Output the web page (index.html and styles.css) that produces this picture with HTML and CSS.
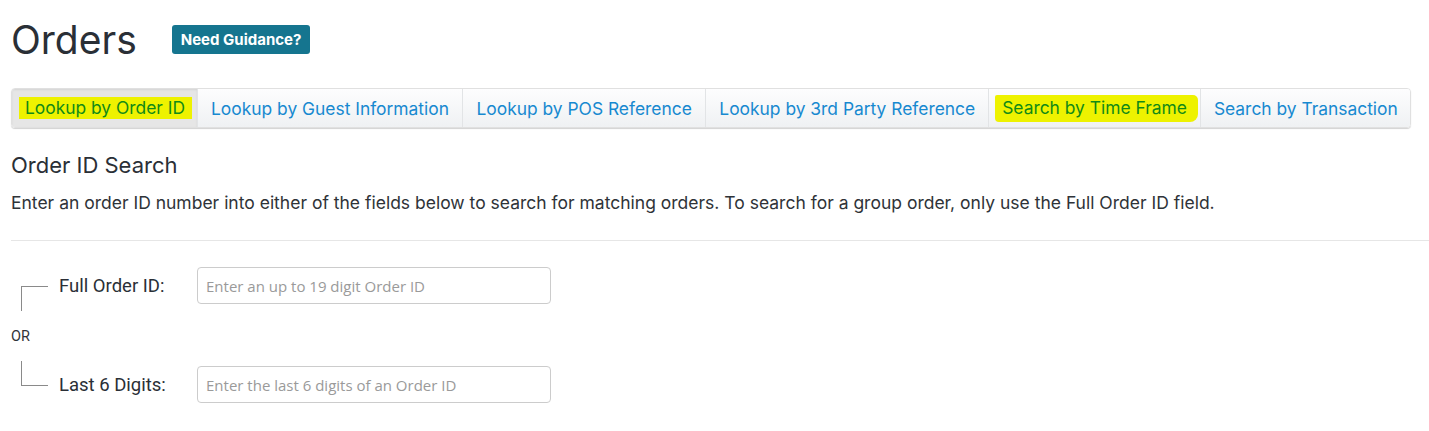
FILE: index.html
```html
<!DOCTYPE html>
<html>
<head>
<meta charset="utf-8">
<link rel="stylesheet" href="styles.css">
</head>
<body>
<div class="page">
  <div class="header">
    <h1 class="title">Orders</h1>
    <button class="guide-btn">Need Guidance?</button>
  </div>
  <div class="tabs">
    <div class="tab active"><span class="hl hl-rect">Lookup by Order ID</span></div>
    <div class="tab">Lookup by Guest Information</div>
    <div class="tab">Lookup by POS Reference</div>
    <div class="tab">Lookup by 3rd Party Reference</div>
    <div class="tab"><span class="hl hl-free">Search by Time Frame</span></div>
    <div class="tab last">Search by Transaction</div>
  </div>
  <h2 class="section-title">Order ID Search</h2>
  <p class="desc">Enter an order ID number into either of the fields below to search for matching orders. To search for a group order, only use the Full Order ID field.</p>
  <hr class="divider">
  <div class="form">
    <div class="connector">
      <div class="bracket top"></div>
      <div class="or">OR</div>
      <div class="bracket bottom"></div>
    </div>
    <div class="fields">
      <div class="row">
        <label class="label">Full Order ID:</label>
        <input class="input" type="text" placeholder="Enter an up to 19 digit Order ID">
      </div>
      <div class="row">
        <label class="label">Last 6 Digits:</label>
        <input class="input" type="text" placeholder="Enter the last 6 digits of an Order ID">
      </div>
    </div>
  </div>
</div>
</body>
</html>
```

FILE: styles.css
```css
* { box-sizing: border-box; }
html, body { margin: 0; padding: 0; background: #fff; }
body { font-family: Inter, "Liberation Sans", sans-serif; color: #2f3338; }
.page { padding: 0 0 0 11px; }

.header { display: flex; align-items: center; height: 78px; }
.title { margin: 0; font-size: 39px; font-weight: 400; color: #2a2f36; line-height: 1; }
.guide-btn {
  margin-left: 35px;
  background: #15758f; color: #fff; border: none; border-radius: 3px;
  font-family: Inter, "Liberation Sans", sans-serif; font-weight: 700; font-size: 15px;
  height: 29px; padding: 0 9px;
}

.tabs {
  display: flex; margin-top: 10px; width: 1400px; height: 40px;
  border: 1px solid #e0e0e0; border-radius: 4px;
  box-shadow: 0 1px 1px rgba(0,0,0,0.18);
  overflow: hidden;
}
.tab {
  display: flex; align-items: center; padding: 0 13px;
  font-size: 17.4px; color: #1789d0;
  background: linear-gradient(#fdfdfe, #eff1f3);
  border-left: 1px solid #e2e4e6;
  white-space: nowrap;
}
.tab:nth-child(3) { padding: 0 13.5px; }
.tab.active {
  background: #e6e6e6; border-left: none; padding: 0 5px 0 7px;
  box-shadow: inset 0 1px 2px rgba(0,0,0,0.08);
}
.tab.last { flex: 1; }
.hl { color: #118a17; background: #eef200; }
.hl-rect { padding: 1px 7px 1px 6px; line-height: 20px; }
.hl-free {
  padding: 3px 11px 4px 7px; margin: 0 -11px 0 -7px;
  border-radius: 2px 5px 8px 4px; line-height: 20px;
}

.section-title { margin: 23px 0 0; font-size: 22px; font-weight: 400; color: #2a2f36; line-height: 28px; }
.desc { margin: 13px 0 0; font-size: 17.5px; line-height: 22px; color: #2f3338; }
.divider { margin: 26px 0 0; border: none; border-top: 1px solid #e6e6e6; }

.form { display: flex; margin-top: 26px; }
.connector { width: 48px; display: flex; flex-direction: column; padding-top: 19px; }
.bracket { width: 27px; height: 25px; margin-left: 10px; border-left: 1px solid #8a8a8a; }
.bracket.top { border-top: 1px solid #8a8a8a; }
.bracket.bottom { border-bottom: 1px solid #8a8a8a; }
.or { font-family: Roboto, "Liberation Sans", sans-serif; font-size: 14.5px; color: #2f3338; height: 50px; line-height: 52px; }

.fields { display: flex; flex-direction: column; gap: 62px; }
.row { display: flex; align-items: center; }
.label { width: 138px; font-family: Roboto, "Liberation Sans", sans-serif; font-size: 18.5px; color: #2a2f36; }
.input {
  width: 354px; height: 37px; border: 1px solid #cccccc; border-radius: 4px;
  padding: 0 8px; font-family: "Open Sans", sans-serif; font-size: 15px; color: #333;
  outline: none;
}
.input::placeholder { color: #9a9a9a; }
```
